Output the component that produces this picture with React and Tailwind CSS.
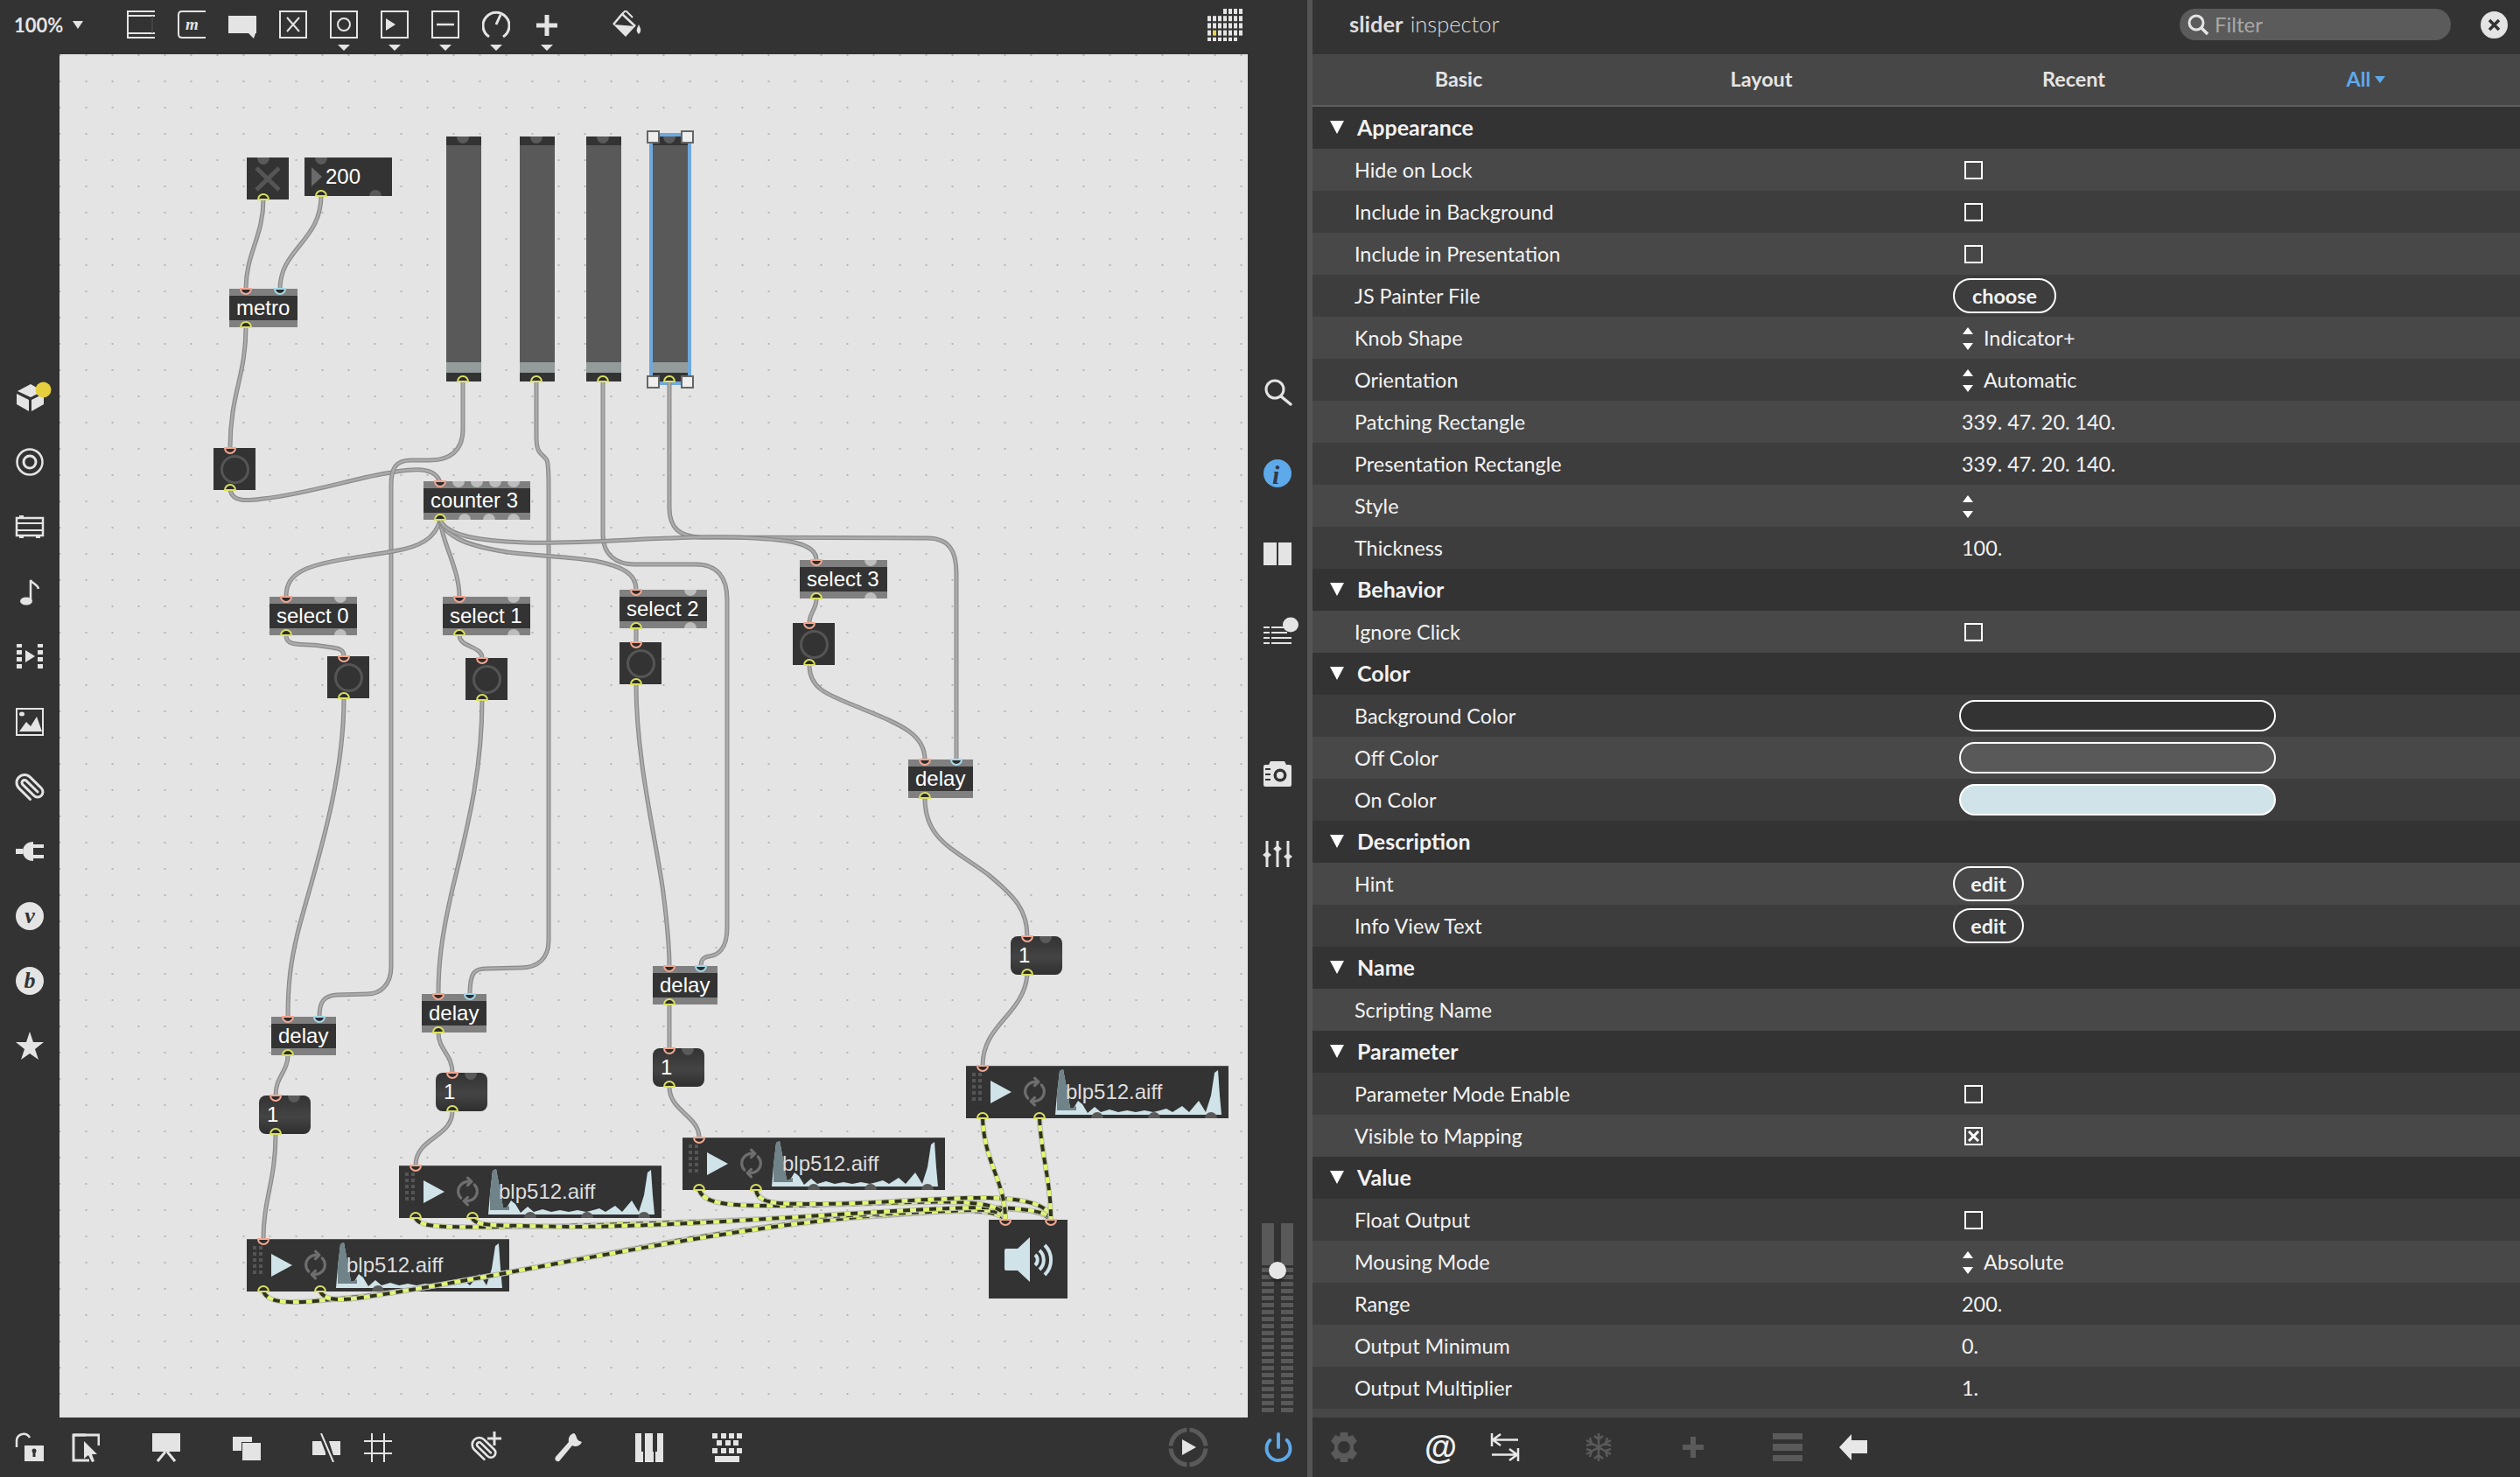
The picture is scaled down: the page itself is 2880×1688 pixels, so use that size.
import { Paperclip, Power, RefreshCw } from "lucide-react"

const wires = [
  "M301 228C301 270 281 290 281 330",
  "M367 224C367 275 320 285 320 330",
  "M281 374C281 430 263 450 263 512",
  "M263 560C266 575 285 572 300 570C350 565 410 545 447 540C470 536 498 532 503 552",
  "M529 436L529 490C529 515 515 526 490 526L470 526C452 526 447 535 447 555L447 1105C447 1125 435 1136 420 1136L385 1137C370 1138 365 1145 365 1162",
  "M613 436L613 500C613 520 620 518 625 526C627 532 627 540 627 555L627 1075C627 1095 615 1106 595 1106L555 1107C542 1107 537 1112 537 1136",
  "M689 436L689 610C689 635 705 645 725 645L795 645C820 645 831 660 831 685L831 1060C831 1085 820 1092 810 1093C803 1094 801 1098 801 1104",
  "M765 436L765 580C765 605 778 613 800 614L1060 615C1085 615 1093 630 1093 655L1093 868",
  "M503 594C498 615 480 625 450 630C410 637 375 640 350 650C332 658 327 668 327 682",
  "M503 594C505 620 525 650 525 682",
  "M503 594C508 615 540 625 580 631C620 636 650 636 680 641C710 647 727 655 727 674",
  "M503 594C510 612 545 618 600 620C680 622 760 612 840 614C900 616 933 620 933 640",
  "M327 726C327 740 345 735 365 738C385 741 393 740 393 750",
  "M525 726C525 740 551 738 551 752",
  "M727 718L727 734",
  "M933 684C933 697 925 700 925 712",
  "M393 798C393 900 357 1000 340 1067C332 1100 329 1125 329 1162",
  "M551 800C551 890 530 960 515 1025C505 1070 501 1100 501 1136",
  "M727 782C727 870 750 960 758 1020C763 1060 765 1080 765 1104",
  "M925 760C925 790 950 795 990 812C1030 828 1057 840 1057 868",
  "M1057 912C1057 960 1090 970 1130 1000C1160 1025 1174 1040 1174 1070",
  "M329 1206C329 1225 315 1230 315 1252",
  "M501 1180C501 1200 517 1205 517 1226",
  "M765 1148L765 1198",
  "M315 1296C315 1350 301 1370 301 1416",
  "M517 1270C517 1300 475 1300 475 1332",
  "M765 1242C765 1270 799 1275 799 1300",
  "M1174 1114C1170 1160 1123 1170 1123 1218",
]

const audioWires = [
  "M301 1476C308 1494 350 1488 400 1483C560 1467 800 1400 1000 1390C1080 1385 1135 1378 1149 1394",
  "M366 1476C372 1488 395 1486 420 1482C600 1455 830 1400 1020 1388C1100 1382 1185 1375 1201 1394",
  "M475 1392C480 1405 520 1402 600 1402C800 1398 1050 1385 1110 1383C1130 1382 1149 1385 1149 1394",
  "M540 1392C543 1402 565 1400 650 1402C800 1402 1000 1382 1120 1380C1170 1380 1201 1385 1201 1394",
  "M799 1360C804 1375 830 1378 880 1378C960 1378 1050 1372 1100 1374C1130 1376 1149 1380 1149 1394",
  "M864 1360C866 1375 885 1376 930 1376C1000 1376 1080 1368 1130 1369C1175 1370 1201 1378 1201 1394",
  "M1123 1278C1125 1330 1149 1350 1149 1394",
  "M1188 1278C1190 1320 1201 1350 1201 1394",
]

const hotInlets = [
  [281, 330], [263, 512], [503, 550], [327, 682], [525, 682], [727, 674], [933, 640],
  [393, 750], [551, 752], [727, 734], [925, 712], [329, 1162], [501, 1136], [765, 1104], [1057, 868],
  [315, 1252], [517, 1226], [765, 1198], [1174, 1070], [301, 1416], [475, 1332], [799, 1300], [1123, 1218],
  [1149, 1394], [1201, 1394],
]
const coldInlets = [[320, 330], [365, 1162], [537, 1136], [801, 1104], [1093, 868]]
const outlets = [
  [301, 228], [367, 224], [281, 374], [263, 560], [529, 436], [613, 436], [689, 436], [765, 436], [503, 594],
  [327, 726], [525, 726], [727, 718], [933, 684], [393, 798], [551, 800], [727, 782], [925, 760],
  [329, 1206], [501, 1180], [765, 1148], [1057, 912], [315, 1296], [517, 1270], [765, 1242], [1174, 1114],
  [301, 1476], [366, 1476], [475, 1392], [540, 1392], [799, 1360], [864, 1360], [1123, 1278], [1188, 1278],
]
const lightTop = [[524, 550], [545, 550], [566, 550], [587, 550], [389, 682], [587, 682], [789, 674], [995, 640]]
const lightBottom = [[531, 594], [559, 594], [587, 594], [389, 726], [587, 726], [789, 718], [995, 684]]
const darkTop = [[301, 180], [367, 180], [529, 156], [613, 156], [689, 156], [765, 156], [336, 1252], [538, 1226], [786, 1198], [1195, 1070]]
const darkBottom = [
  [429, 224], [432, 1476], [606, 1392], [671, 1392], [736, 1392], [930, 1360], [995, 1360], [1060, 1360],
  [1254, 1278], [1319, 1278], [1384, 1278],
]

function Overlay() {
  return (
    <svg className="absolute inset-0 w-full h-full pointer-events-none" viewBox="68 62 1358 1558" fill="none">
      {lightTop.map(([x, y]) => (
        <path key={`lt${x}${y}`} d={`M${x - 7} ${y}A7 7 0 0 0 ${x + 7} ${y}Z`} fill="#bdbdbd" />
      ))}
      {lightBottom.map(([x, y]) => (
        <path key={`lb${x}${y}`} d={`M${x - 7} ${y}A7 7 0 0 1 ${x + 7} ${y}Z`} fill="#bdbdbd" />
      ))}
      {darkTop.map(([x, y]) => (
        <path key={`dt${x}${y}`} d={`M${x - 7} ${y}A7 8 0 0 0 ${x + 7} ${y}Z`} fill="#5a5a5a" />
      ))}
      {darkBottom.map(([x, y]) => (
        <path key={`db${x}${y}`} d={`M${x - 7} ${y}A7 7 0 0 1 ${x + 7} ${y}Z`} fill="#5a5a5a" />
      ))}
      {wires.map((d) => (
        <g key={d}>
          <path d={d} stroke="#8a8a8a" strokeWidth="5" />
          <path d={d} stroke="#ababab" strokeWidth="2.6" />
        </g>
      ))}
      {audioWires.map((d) => (
        <g key={d}>
          <path d={d} stroke="#b9b9b9" strokeWidth="6" />
          <path d={d} stroke="#e2f76e" strokeWidth="4" />
          <path d={d} stroke="#30341f" strokeWidth="4" strokeDasharray="8 7" />
        </g>
      ))}
      {hotInlets.map(([x, y]) => (
        <path key={`h${x}${y}`} d={`M${x - 6} ${y}A6 6 0 0 0 ${x + 6} ${y}Z`} fill="#2c2c2c" stroke="#f3a791" strokeWidth="2" />
      ))}
      {coldInlets.map(([x, y]) => (
        <path key={`c${x}${y}`} d={`M${x - 6} ${y}A6 6 0 0 0 ${x + 6} ${y}Z`} fill="#2c2c2c" stroke="#a3d9ea" strokeWidth="2" />
      ))}
      {outlets.map(([x, y]) => (
        <path key={`o${x}${y}`} d={`M${x - 6} ${y}A6 6 0 0 1 ${x + 6} ${y}Z`} fill="#2c2c2c" stroke="#dbe060" strokeWidth="2" />
      ))}
    </svg>
  )
}

function Obj({ className, children }) {
  return (
    <div className={`absolute h-[44px] bg-[#333] border-y-[8px] border-[#808080] pl-[8px] flex items-center text-[24px] leading-[28px] text-white whitespace-nowrap font-['Liberation_Sans',sans-serif] ${className}`}>
      {children}
    </div>
  )
}

function Bang({ className }) {
  return (
    <div className={`absolute w-[48px] h-[48px] bg-[#333] flex items-center justify-center ${className}`}>
      <div className="w-[33px] h-[33px] rounded-full border-[3.5px] border-[#555]" />
    </div>
  )
}

function Msg({ className }) {
  return (
    <div className={`absolute w-[59px] h-[44px] rounded-[8px] bg-[linear-gradient(#333,#444_55%,#2f2f2f)] pl-[9px] flex items-center text-[24px] text-white font-['Liberation_Sans',sans-serif] ${className}`}>
      1
    </div>
  )
}

function Slider({ className }) {
  return (
    <div className={`absolute w-[40px] h-[280px] flex flex-col ${className}`}>
      <div className="h-[10px] bg-[#333]" />
      <div className="flex-1 bg-[#595959]" />
      <div className="h-[12px] bg-[#939b9b]" />
      <div className="h-[10px] bg-[#333]" />
    </div>
  )
}

function Playlist({ className }) {
  return (
    <div className={`absolute w-[300px] h-[60px] bg-[#333] border-t border-[#555] ${className}`}>
      <div className="absolute left-[7px] top-[7px] w-[11px] grid grid-cols-2 gap-[3px]">
        {Array.from({ length: 10 }).map((_, i) => (
          <div key={i} className="h-[4px] bg-[#555]" />
        ))}
      </div>
      <svg className="absolute left-[28px] top-[16px]" width="24" height="26" viewBox="0 0 24 26">
        <path d="M0 0L24 13L0 26Z" fill="#cfe3e8" />
      </svg>
      <RefreshCw className="absolute left-[64px] top-[14px] -rotate-45 text-[#6e6e6e]" size={29} strokeWidth={2.6} />
      <svg className="absolute left-[102px] top-[3px]" width="190" height="52" viewBox="0 0 190 52">
        <path d="M0 52L2 28L5 2L9 0L12 16L17 44L20 46L26 36L31 40L37 50L45 43L52 49L62 46L72 49L82 47L92 49L102 47L112 49L120 47L127 45L134 49L145 42L153 49L164 36L172 49L178 30L182 4L186 1L188 30L190 52Z" fill="#cfe3e8" />
        <path d="M2 28L5 2L9 0L12 16L17 44L20 44L24 42L24 47L2 47Z" fill="#6f8388" />
      </svg>
      <div className="absolute left-[114px] top-[15px] text-[24px] leading-[28px] text-[#dedede] font-['Liberation_Sans',sans-serif]">
        blp512.aiff
      </div>
    </div>
  )
}

function Canvas() {
  return (
    <div className="relative w-[1358px] bg-[#e4e4e4] bg-[radial-gradient(circle,#b6b6b6_1px,transparent_1.4px)] bg-size-[30px_30px] bg-position-[-14.5px_-14px] overflow-hidden">
      <div className="absolute left-[214px] top-[118px] w-[48px] h-[48px] bg-[#333]">
        <svg width="48" height="48" viewBox="0 0 48 48">
          <path d="M11 12L37 37M37 12L11 37" stroke="#555" strokeWidth="5" />
        </svg>
      </div>
      <div className="absolute left-[280px] top-[118px] w-[100px] h-[44px] bg-[#333] flex items-center text-[24px] text-white font-['Liberation_Sans',sans-serif]">
        <div className="ml-[8px] mr-[4px] w-0 h-0 border-y-[11px] border-y-transparent border-l-[12px] border-l-[#6a6a6a]" />
        200
      </div>
      <Obj className="left-[194px] top-[268px] w-[78px]">metro</Obj>
      <Bang className="left-[176px] top-[450px]" />
      <Slider className="left-[442px] top-[94px]" />
      <Slider className="left-[526px] top-[94px]" />
      <Slider className="left-[602px] top-[94px]" />
      <div className="absolute left-[674px] top-[90px] w-[48px] h-[288px] border-[4px] border-[#6fa8dc]" />
      <Slider className="left-[678px] top-[94px]" />
      <div className="absolute left-[671px] top-[87px] w-[15px] h-[15px] bg-[#eee] border-2 border-[#666]" />
      <div className="absolute left-[710px] top-[87px] w-[15px] h-[15px] bg-[#eee] border-2 border-[#666]" />
      <div className="absolute left-[671px] top-[367px] w-[15px] h-[15px] bg-[#eee] border-2 border-[#666]" />
      <div className="absolute left-[710px] top-[367px] w-[15px] h-[15px] bg-[#eee] border-2 border-[#666]" />
      <Obj className="left-[416px] top-[488px] w-[122px]">counter 3</Obj>
      <Obj className="left-[240px] top-[620px] w-[100px]">select 0</Obj>
      <Obj className="left-[438px] top-[620px] w-[100px]">select 1</Obj>
      <Obj className="left-[640px] top-[612px] w-[100px]">select 2</Obj>
      <Obj className="left-[846px] top-[578px] w-[100px]">select 3</Obj>
      <Bang className="left-[306px] top-[688px]" />
      <Bang className="left-[464px] top-[690px]" />
      <Bang className="left-[640px] top-[672px]" />
      <Bang className="left-[838px] top-[650px]" />
      <Obj className="left-[970px] top-[806px] w-[74px]">delay</Obj>
      <Obj className="left-[242px] top-[1100px] w-[74px]">delay</Obj>
      <Obj className="left-[414px] top-[1074px] w-[74px]">delay</Obj>
      <Obj className="left-[678px] top-[1042px] w-[74px]">delay</Obj>
      <Msg className="left-[228px] top-[1190px]" />
      <Msg className="left-[430px] top-[1164px]" />
      <Msg className="left-[678px] top-[1136px]" />
      <Msg className="left-[1087px] top-[1008px]" />
      <Playlist className="left-[214px] top-[1354px]" />
      <Playlist className="left-[388px] top-[1270px]" />
      <Playlist className="left-[712px] top-[1238px]" />
      <Playlist className="left-[1036px] top-[1156px]" />
      <div className="absolute left-[1062px] top-[1332px] w-[90px] h-[90px] bg-[#333]">
        <svg width="90" height="90" viewBox="0 0 90 90" fill="none">
          <path d="M20 33H33L47 20V71L33 58H20Q18 58 18 56V35Q18 33 20 33Z" fill="#cfe3e8" />
          <path d="M53 40A8 8 0 0 1 53 52M58 35A15 15 0 0 1 58 57M64 29A24 24 0 0 1 64 63" stroke="#cfe3e8" strokeWidth="4" />
        </svg>
      </div>
      <Overlay />
    </div>
  )
}

function Caret() {
  return <div className="w-0 h-0 border-x-[7px] border-x-transparent border-t-[7px] border-t-[#e4e4e4]" />
}

const toolIcons = [
  {
    id: "object",
    body: (
      <>
        <path d="M1 0V32" stroke="currentColor" strokeWidth="2" />
        <path d="M1 1H32M1 6H32M1 26H32M1 31H32" stroke="currentColor" strokeWidth="2" />
        <path d="M29 6V26" stroke="#555" strokeWidth="1" />
      </>
    ),
  },
  {
    id: "message",
    body: (
      <>
        <path d="M32 1H5Q1 1 1 5V27Q1 31 5 31H32" stroke="currentColor" strokeWidth="2" fill="none" />
        <text x="9" y="22" fontSize="19" fontStyle="italic" fontWeight="700" fontFamily="Liberation Serif, serif" fill="currentColor">m</text>
      </>
    ),
  },
  { id: "comment", body: <path d="M0 6H32V26H31L29 32L23 26H0Z" fill="currentColor" /> },
  {
    id: "toggle",
    body: (
      <>
        <rect x="1" y="1" width="30" height="30" stroke="currentColor" strokeWidth="2" fill="none" />
        <path d="M9 8L23 24M23 8L9 24" stroke="currentColor" strokeWidth="2" />
      </>
    ),
  },
  {
    id: "button",
    caret: true,
    body: (
      <>
        <rect x="1" y="1" width="30" height="30" stroke="currentColor" strokeWidth="2" fill="none" />
        <circle cx="16" cy="16" r="7" stroke="currentColor" strokeWidth="2" fill="none" />
      </>
    ),
  },
  {
    id: "number",
    caret: true,
    body: (
      <>
        <rect x="1" y="1" width="30" height="30" stroke="currentColor" strokeWidth="2" fill="none" />
        <path d="M6 9L17 16L6 23Z" fill="currentColor" />
      </>
    ),
  },
  {
    id: "slider",
    caret: true,
    body: (
      <>
        <rect x="1" y="1" width="30" height="30" stroke="currentColor" strokeWidth="2" fill="none" />
        <path d="M6 16H26" stroke="currentColor" strokeWidth="2.5" />
      </>
    ),
  },
  {
    id: "dial",
    caret: true,
    body: (
      <path d="M8 30A15 15 0 1 1 24 30M16 16L21 5" stroke="currentColor" strokeWidth="3" fill="none" />
    ),
  },
  { id: "plus", caret: true, body: <path d="M16 5V29M4 17H28" stroke="currentColor" strokeWidth="5" /> },
]

function TopBar() {
  return (
    <div className="h-[62px] flex items-start text-[#e4e4e4]">
      <div className="w-[132px] h-[56px] pl-[16px] flex items-center gap-[11px] text-[22px] font-bold font-[Lato,sans-serif]">
        100%
        <div className="w-0 h-0 border-x-[6px] border-x-transparent border-t-[9px] border-t-[#e4e4e4]" />
      </div>
      {toolIcons.map((t) => (
        <div key={t.id} className="w-[58px] h-[62px] pt-[12px] flex flex-col items-center gap-[7px]">
          <svg width="32" height="32" viewBox="0 0 32 32" fill="none">{t.body}</svg>
          {t.caret && <Caret />}
        </div>
      ))}
      <div className="ml-[34px] w-[58px] pt-[12px] flex justify-center">
        <svg width="36" height="32" viewBox="0 0 36 32" fill="currentColor">
          <path d="M2 16L12 4L27 18" stroke="currentColor" strokeWidth="2.5" fill="none" strokeLinejoin="round" />
          <path d="M12 4L16 0L24 8" stroke="currentColor" strokeWidth="2" fill="none" />
          <path d="M2 16L27 18L16 30Z" />
          <path d="M31 16C33 21 35 23 31 27C27 23 29 21 31 16Z" />
        </svg>
      </div>
      <div className="ml-auto mr-[74px] mt-[10px] w-[40px] h-[37px]">
        <svg width="40" height="37" viewBox="0 0 40 37" fill="#e4e4e4">
          {[0, 1, 2, 3, 4].map((r) =>
            [0, 1, 2, 3, 4, 5, 6].map((c) => {
              if (r === 0 && c < 3) return null
              if (r === 4 && c === 6) return null
              return (
                <rect
                  key={`${r}${c}`}
                  x={c * 6}
                  y={r * 8.2}
                  width="4"
                  height="6"
                  fill={r === 3 && c === 1 ? "#ecd14a" : "#e4e4e4"}
                />
              )
            })
          )}
        </svg>
      </div>
    </div>
  )
}

const leftIcons = [
  {
    id: "packages",
    body: (
      <>
        <path d="M19 3L33 11L19 18L4 11Z" />
        <path d="M3 14L17 21V34L3 26Z" />
        <path d="M20 21L34 14V26L20 34Z" />
        <circle cx="33.5" cy="9.5" r="9" fill="#e6cf3f" />
      </>
    ),
  },
  {
    id: "target",
    body: (
      <>
        <circle cx="18" cy="18" r="14.5" stroke="currentColor" strokeWidth="2.5" fill="none" />
        <circle cx="18" cy="18" r="7" stroke="currentColor" strokeWidth="3" fill="none" />
      </>
    ),
  },
  {
    id: "media",
    body: (
      <>
        <rect x="3" y="8" width="30" height="20" stroke="currentColor" strokeWidth="2.5" fill="none" />
        <path d="M3 14H33M3 22H33" stroke="currentColor" strokeWidth="2" />
        <rect x="6" y="5" width="5" height="3" />
        <rect x="25" y="28" width="5" height="3" />
        <rect x="6" y="28" width="5" height="3" />
      </>
    ),
  },
  {
    id: "note",
    body: (
      <>
        <ellipse cx="14" cy="29" rx="7" ry="4.5" />
        <path d="M19 29V5C21 9 27 10 28 15" stroke="currentColor" strokeWidth="2.5" fill="none" />
      </>
    ),
  },
  {
    id: "video",
    body: (
      <>
        <path d="M3 4H9V8H3ZM3 11H9V16H3ZM3 19H9V24H3ZM3 27H9V32H3ZM27 4H33V8H27ZM27 11H33V16H27ZM27 19H33V24H27ZM27 27H33V32H27Z" />
        <path d="M13 11L24 18L13 25Z" />
      </>
    ),
  },
  {
    id: "image",
    body: (
      <>
        <rect x="3" y="3" width="30" height="30" stroke="currentColor" strokeWidth="2" fill="none" />
        <ellipse cx="9" cy="9" rx="3" ry="2.5" />
        <path d="M6 29L14 18L19 23L26 12L32 29Z" />
      </>
    ),
  },
  { id: "clip" },
  {
    id: "plug",
    body: (
      <>
        <path d="M2 15H10V21H2Z" />
        <path d="M10 18C10 10 17 7 22 7V29C17 29 10 26 10 18Z" />
        <path d="M22 10H34V14H22ZM22 22H34V26H22Z" />
      </>
    ),
  },
  { id: "v", letter: "v" },
  { id: "b", letter: "b" },
  { id: "star", body: <path d="M18 2L22 14L34 14L24 22L28 34L18 27L8 34L12 22L2 14L14 14Z" /> },
]

function LeftBar() {
  return (
    <div className="w-[68px] pt-[355px] flex flex-col text-[#e4e4e4]">
      {leftIcons.map((i) => (
        <div key={i.id} className="h-[74.1px] flex items-center justify-center">
          {i.id === "clip" && <Paperclip className="rotate-90" size={36} strokeWidth={2} />}
          {i.letter && (
            <div className="w-[32px] h-[32px] rounded-full bg-[#e4e4e4] flex items-center justify-center text-[#333] text-[26px] leading-none italic font-bold font-['Liberation_Serif',serif]">
              {i.letter}
            </div>
          )}
          {i.body && (
            <svg className="overflow-visible" width="36" height="36" viewBox="0 0 36 36" fill="currentColor">{i.body}</svg>
          )}
        </div>
      ))}
    </div>
  )
}

const rightIcons = [
  {
    id: "search",
    body: (
      <>
        <circle cx="14" cy="13" r="10" stroke="currentColor" strokeWidth="3" fill="none" />
        <path d="M21 21L32 30" stroke="currentColor" strokeWidth="3.5" strokeLinecap="round" />
      </>
    ),
  },
  {
    id: "info",
    body: (
      <>
        <circle cx="17" cy="17" r="16" fill="#5ea9ea" />
        <text x="11" y="29" fontSize="30" fontStyle="italic" fontWeight="700" fontFamily="Liberation Serif, serif" fill="#2f3b45">i</text>
      </>
    ),
  },
  { id: "docs", body: <path d="M1 4H16V30H1ZM18 4H33V30H18Z" /> },
  {
    id: "clue",
    body: (
      <>
        <path d="M1 8H8V10H1ZM1 14H8V16H1ZM1 20H8V22H1ZM1 26H8V28H1ZM10 8H24V10H10ZM10 14H28V16H10ZM10 20H33V22H10ZM10 26H33V28H10Z" />
        <ellipse cx="32" cy="6" rx="9" ry="8.5" />
      </>
    ),
  },
]

function VuStrip() {
  return (
    <div className="w-[14px] flex flex-col gap-[2.5px]">
      <div className="h-[48px] bg-[#595959]" />
      {Array.from({ length: 21 }).map((_, i) => (
        <div key={i} className="h-[5.5px] bg-[#595959]" />
      ))}
    </div>
  )
}

function RightBar() {
  return (
    <div className="w-[68px] pt-[341px] pb-[6px] flex flex-col text-[#e4e4e4]">
      {rightIcons.map((i) => (
        <div key={i.id} className="h-[92px] flex items-center justify-center">
          <svg width="34" height="34" viewBox="0 0 34 34" fill="currentColor" className="overflow-visible">{i.body}</svg>
        </div>
      ))}
      <div className="mt-[67px] h-[92px] flex items-center justify-center">
        <svg width="34" height="34" viewBox="0 0 34 34">
          <path d="M9 3H25L27 7H31Q33 7 33 9V30Q33 32 31 32H3Q1 32 1 30V9Q1 7 3 7H7Z" fill="currentColor" />
          <circle cx="20" cy="19" r="7.5" fill="#333" />
          <circle cx="20" cy="19" r="4" fill="currentColor" />
          <path d="M3 12H9M3 18H9M3 24H9" stroke="#333" strokeWidth="2" />
        </svg>
      </div>
      <div className="h-[92px] flex items-center justify-center">
        <svg width="34" height="34" viewBox="0 0 34 34" fill="currentColor">
          <path d="M5 2V32M17 2V32M29 2V32" stroke="currentColor" strokeWidth="3" />
          <path d="M5 14L10 18L5 22L0 18ZM17 7L22 11L17 15L12 11ZM29 16L34 20L29 24L24 20Z" />
        </svg>
      </div>
      <div className="relative mt-auto flex justify-center gap-[8px]">
        <VuStrip />
        <VuStrip />
        <div className="absolute left-[24px] top-[44px] w-[20px] h-[20px] rounded-full bg-[#e6e6e6] shadow-[0_2px_3px_rgba(0,0,0,0.5)]" />
      </div>
    </div>
  )
}

function BottomBar() {
  return (
    <div className="h-[68px] flex items-center text-[#e4e4e4]">
      <svg className="ml-[16px]" width="36" height="36" viewBox="0 0 36 36" fill="currentColor">
        <path d="M3 18V10A8 8 0 0 1 18 7" stroke="currentColor" strokeWidth="2.5" fill="none" />
        <path d="M12 16H34V34H12Z" />
        <path d="M23 21V29" stroke="#333" strokeWidth="3" />
        <circle cx="23" cy="22" r="2.5" fill="#333" />
      </svg>
      <svg className="ml-[30px]" width="32" height="33" viewBox="0 0 32 33" fill="currentColor">
        <path d="M16 2H2V31H20" stroke="currentColor" strokeWidth="3" fill="none" />
        <path d="M2 2H31V14" stroke="currentColor" strokeWidth="3" fill="none" />
        <path d="M14 9L29 24L23 24L26 32L23 33L19 25L14 29Z" />
      </svg>
      <svg className="ml-[60px]" width="32" height="33" viewBox="0 0 32 33" fill="currentColor">
        <path d="M0 0H32V21H0Z" />
        <path d="M15 21L6 32M17 21L26 32" stroke="currentColor" strokeWidth="3" />
      </svg>
      <svg className="ml-[60px]" width="32" height="33" viewBox="0 0 32 33" fill="currentColor">
        <path d="M0 4H22V10H10V20H0Z" />
        <path d="M11 11H32V31H11Z" />
      </svg>
      <svg className="ml-[59px]" width="32" height="33" viewBox="0 0 32 33" fill="currentColor">
        <path d="M0 9H10L15 22V25H0ZM19 9H32V25H24Z" />
        <path d="M10 0L24 33" stroke="currentColor" strokeWidth="2" />
      </svg>
      <svg className="ml-[27px]" width="32" height="33" viewBox="0 0 32 33" stroke="currentColor" strokeWidth="2">
        <path d="M9 0V33M23 0V33M0 9H32M0 23H32" />
      </svg>
      <div className="relative ml-[89px] w-[34px] h-[36px]">
        <Paperclip className="absolute left-0 top-[3px] rotate-90" size={32} strokeWidth={2} />
        <svg className="absolute left-[20px] top-0" width="16" height="16" viewBox="0 0 16 16" stroke="currentColor" strokeWidth="3">
          <path d="M8 0V16M0 8H16" />
        </svg>
      </div>
      <svg className="ml-[62px]" width="32" height="33" viewBox="0 0 32 33" fill="currentColor">
        <path d="M23 0C27 2 24 8 32 10C30 15 24 16 21 14L6 32C3 33 0 30 2 27L17 10C16 6 18 1 23 0Z" />
      </svg>
      <svg className="ml-[61px]" width="32" height="33" viewBox="0 0 32 33" fill="currentColor">
        <path d="M0 0H7V21H9V33H0ZM11 0H20V21H21V33H11V21H11ZM25 0H32V33H23V21H25Z" />
      </svg>
      <svg className="ml-[56px]" width="36" height="33" viewBox="0 0 36 33" fill="currentColor">
        {[0, 10, 19, 28].map((x) => <rect key={x} x={x} y="0" width="6" height="6" />)}
        {[5, 15, 24].map((x) => <rect key={x} x={x} y="8" width="6" height="6" />)}
        {[0, 10, 19, 28].map((x) => <rect key={x} x={x} y="17" width="6" height="6" />)}
        <rect x="3" y="26" width="28" height="7" />
      </svg>
      <svg className="ml-auto" width="46" height="46" viewBox="0 0 46 46" fill="none">
        <circle cx="23" cy="23" r="20" stroke="#5a5a5a" strokeWidth="5" />
        <path d="M23 0V6M23 40V46M0 23H6M40 23H46" stroke="#333" strokeWidth="3" />
        <path d="M16 14L32 23L16 32Z" fill="#e4e4e4" />
      </svg>
      <Power className="ml-[62px] mr-[15px] text-[#5ea9ea]" size={36} strokeWidth={2.6} />
    </div>
  )
}

const sections = [
  {
    title: "Appearance",
    rows: [
      { label: "Hide on Lock", kind: "check" },
      { label: "Include in Background", kind: "check" },
      { label: "Include in Presentation", kind: "check" },
      { label: "JS Painter File", kind: "button", value: "choose", size: "w-[118px]" },
      { label: "Knob Shape", kind: "select", value: "Indicator+" },
      { label: "Orientation", kind: "select", value: "Automatic" },
      { label: "Patching Rectangle", value: "339. 47. 20. 140." },
      { label: "Presentation Rectangle", value: "339. 47. 20. 140." },
      { label: "Style", kind: "select", value: "" },
      { label: "Thickness", value: "100." },
    ],
  },
  { title: "Behavior", rows: [{ label: "Ignore Click", kind: "check" }] },
  {
    title: "Color",
    rows: [
      { label: "Background Color", kind: "color", swatch: "bg-[#333]" },
      { label: "Off Color", kind: "color", swatch: "bg-[#595959]" },
      { label: "On Color", kind: "color", swatch: "bg-[#cfe3e8]" },
    ],
  },
  {
    title: "Description",
    rows: [
      { label: "Hint", kind: "button", value: "edit", size: "w-[81px]" },
      { label: "Info View Text", kind: "button", value: "edit", size: "w-[81px]" },
    ],
  },
  { title: "Name", rows: [{ label: "Scripting Name", value: "" }] },
  {
    title: "Parameter",
    rows: [
      { label: "Parameter Mode Enable", kind: "check" },
      { label: "Visible to Mapping", kind: "check", checked: true },
    ],
  },
  {
    title: "Value",
    rows: [
      { label: "Float Output", kind: "check" },
      { label: "Mousing Mode", kind: "select", value: "Absolute" },
      { label: "Range", value: "200." },
      { label: "Output Minimum", value: "0." },
      { label: "Output Multiplier", value: "1." },
    ],
  },
]

function RowValue({ row }) {
  if (row.kind === "check") {
    return (
      <div className="ml-[3px] w-[21px] h-[21px] border-2 border-white flex items-center justify-center">
        {row.checked && (
          <svg width="13" height="13" viewBox="0 0 13 13" stroke="white" strokeWidth="3">
            <path d="M1 1L12 12M12 1L1 12" />
          </svg>
        )}
      </div>
    )
  }
  if (row.kind === "button") {
    return (
      <div className={`-ml-[10px] h-[40px] pt-[1px] rounded-full border-2 border-white flex items-center justify-center font-bold text-[#f2f2f2] ${row.size}`}>
        {row.value}
      </div>
    )
  }
  if (row.kind === "select") {
    return (
      <div className="flex items-center gap-[11px] pt-[2px] text-[#f2f2f2]">
        <div className="ml-[1px] w-[13px] flex flex-col gap-[10px]">
          <div className="w-0 h-0 border-x-[6.5px] border-x-transparent border-b-[8px] border-b-white" />
          <div className="w-0 h-0 border-x-[6.5px] border-x-transparent border-t-[8px] border-t-white" />
        </div>
        {row.value}
      </div>
    )
  }
  if (row.kind === "color") {
    return <div className={`-ml-[3px] w-[362px] h-[36px] rounded-full border-2 border-white ${row.swatch}`} />
  }
  return <span className="pt-[2px] text-[#f2f2f2]">{row.value}</span>
}

function Inspector() {
  let n = 0
  return (
    <div className="flex-1 flex flex-col bg-[#333] text-[23.4px] leading-none font-[Lato,sans-serif] text-[#f2f2f2]">
      <div className="h-[62px] pb-[6px] flex items-center pl-[42px] pr-[14px] text-[25.5px] text-[#dcdcdc]">
        <span className="font-bold">slider</span>
        <span className="ml-[8px] font-light">inspector</span>
        <div className="ml-auto w-[310px] h-[36px] rounded-full bg-[#5b5b5b] pl-[8px] flex items-center gap-[6px] text-[24px] text-[#a8a8a8]">
          <svg width="26" height="26" viewBox="0 0 26 26" fill="none" stroke="#e4e4e4">
            <circle cx="11" cy="11" r="8" strokeWidth="3" />
            <path d="M17 17L24 24" strokeWidth="3.5" />
          </svg>
          Filter
        </div>
        <div className="ml-[34px] w-[31px] h-[31px] rounded-full bg-[#e4e4e4] flex items-center justify-center">
          <svg width="15" height="15" viewBox="0 0 15 15" stroke="#333" strokeWidth="3.5">
            <path d="M2 2L13 13M13 2L2 13" />
          </svg>
        </div>
      </div>
      <div className="h-[60px] grid grid-cols-[334px_358px_356px_312px] items-center bg-[#474747] border-b-2 border-[#5e5e5e] text-center font-bold text-[#e4e4e4] text-[23.4px]">
        <div>Basic</div>
        <div>Layout</div>
        <div>Recent</div>
        <div className="flex items-center justify-center gap-[5px] text-[#5ea9ea]">
          All
          <div className="w-0 h-0 border-x-[6px] border-x-transparent border-t-[8px] border-t-[#5ea9ea]" />
        </div>
      </div>
      {sections.map((s) => (
        <div key={s.title}>
          <div className="h-[48px] pb-[2px] flex items-center pl-[20px] gap-[15px] font-bold text-[25px] text-[#f2f2f2]">
            <div className="w-0 h-0 border-x-[8px] border-x-transparent border-t-[15px] border-t-white" />
            {s.title}
          </div>
          {s.rows.map((row) => {
            n += 1
            return (
              <div
                key={row.label}
                className={`h-[48px] flex items-center pl-[48px] ${n % 2 === 1 ? "bg-[#484848]" : "bg-[#3d3d3d]"}`}
              >
                <div className="w-[694px] shrink-0 pt-[2px]">{row.label}</div>
                <RowValue row={row} />
              </div>
            )
          })}
        </div>
      ))}
      <div className="h-[10px] bg-[#474747]" />
      <div className="flex-1 flex items-center text-[#5a5a5a]">
        <svg className="ml-[20px]" width="32" height="34" viewBox="0 0 32 34" fill="currentColor">
          <path fillRule="evenodd" d="M12 0H20L21 5L26 3L31 10L27 14V20L31 24L26 31L21 29L20 34H12L11 29L6 31L1 24L5 20V14L1 10L6 3L11 5ZM16 10A7 7 0 1 0 16 24A7 7 0 1 0 16 10Z" />
        </svg>
        <div className="ml-[76px] w-[34px] text-center text-[38px] font-bold text-[#f0f0f0] font-['Liberation_Sans',sans-serif]">@</div>
        <svg className="ml-[41px]" width="34" height="32" viewBox="0 0 34 32" fill="none" stroke="#e8e8e8" strokeWidth="2.5">
          <path d="M2 0V15M2 7.5H32M12 1L3 7.5L12 14" />
          <path d="M32 17V32M2 24.5H32M22 18L31 24.5L22 31" />
        </svg>
        <svg className="ml-[74px]" width="32" height="32" viewBox="0 0 32 32" fill="none" stroke="currentColor" strokeWidth="2.5">
          <path d="M16 0V32M2 8L30 24M2 24L30 8M11 3L16 7L21 3M11 29L16 25L21 29M2 14L8 12L6 5M30 18L24 20L26 27M2 18L8 20L6 27M30 14L24 12L26 5" />
        </svg>
        <svg className="ml-[80px]" width="24" height="24" viewBox="0 0 24 24" stroke="currentColor" strokeWidth="6">
          <path d="M12 0V24M0 12H24" />
        </svg>
        <svg className="ml-[79px]" width="34" height="32" viewBox="0 0 34 32" fill="currentColor">
          <path d="M0 0H34V7H0ZM0 12H34V20H0ZM0 25H34V32H0Z" />
        </svg>
        <svg className="ml-[42px]" width="32" height="30" viewBox="0 0 32 30" fill="#e8e8e8">
          <path d="M0 15L14 0V7H32V22H14V30Z" />
        </svg>
      </div>
    </div>
  )
}

export default function App() {
  return (
    <div className="w-[2880px] h-[1688px] flex bg-[#333] overflow-hidden">
      <div className="w-[1494px] flex flex-col">
        <TopBar />
        <div className="flex-1 flex min-h-0">
          <LeftBar />
          <Canvas />
          <RightBar />
        </div>
        <BottomBar />
      </div>
      <div className="w-[6px] bg-[#555]" />
      <Inspector />
    </div>
  )
}
